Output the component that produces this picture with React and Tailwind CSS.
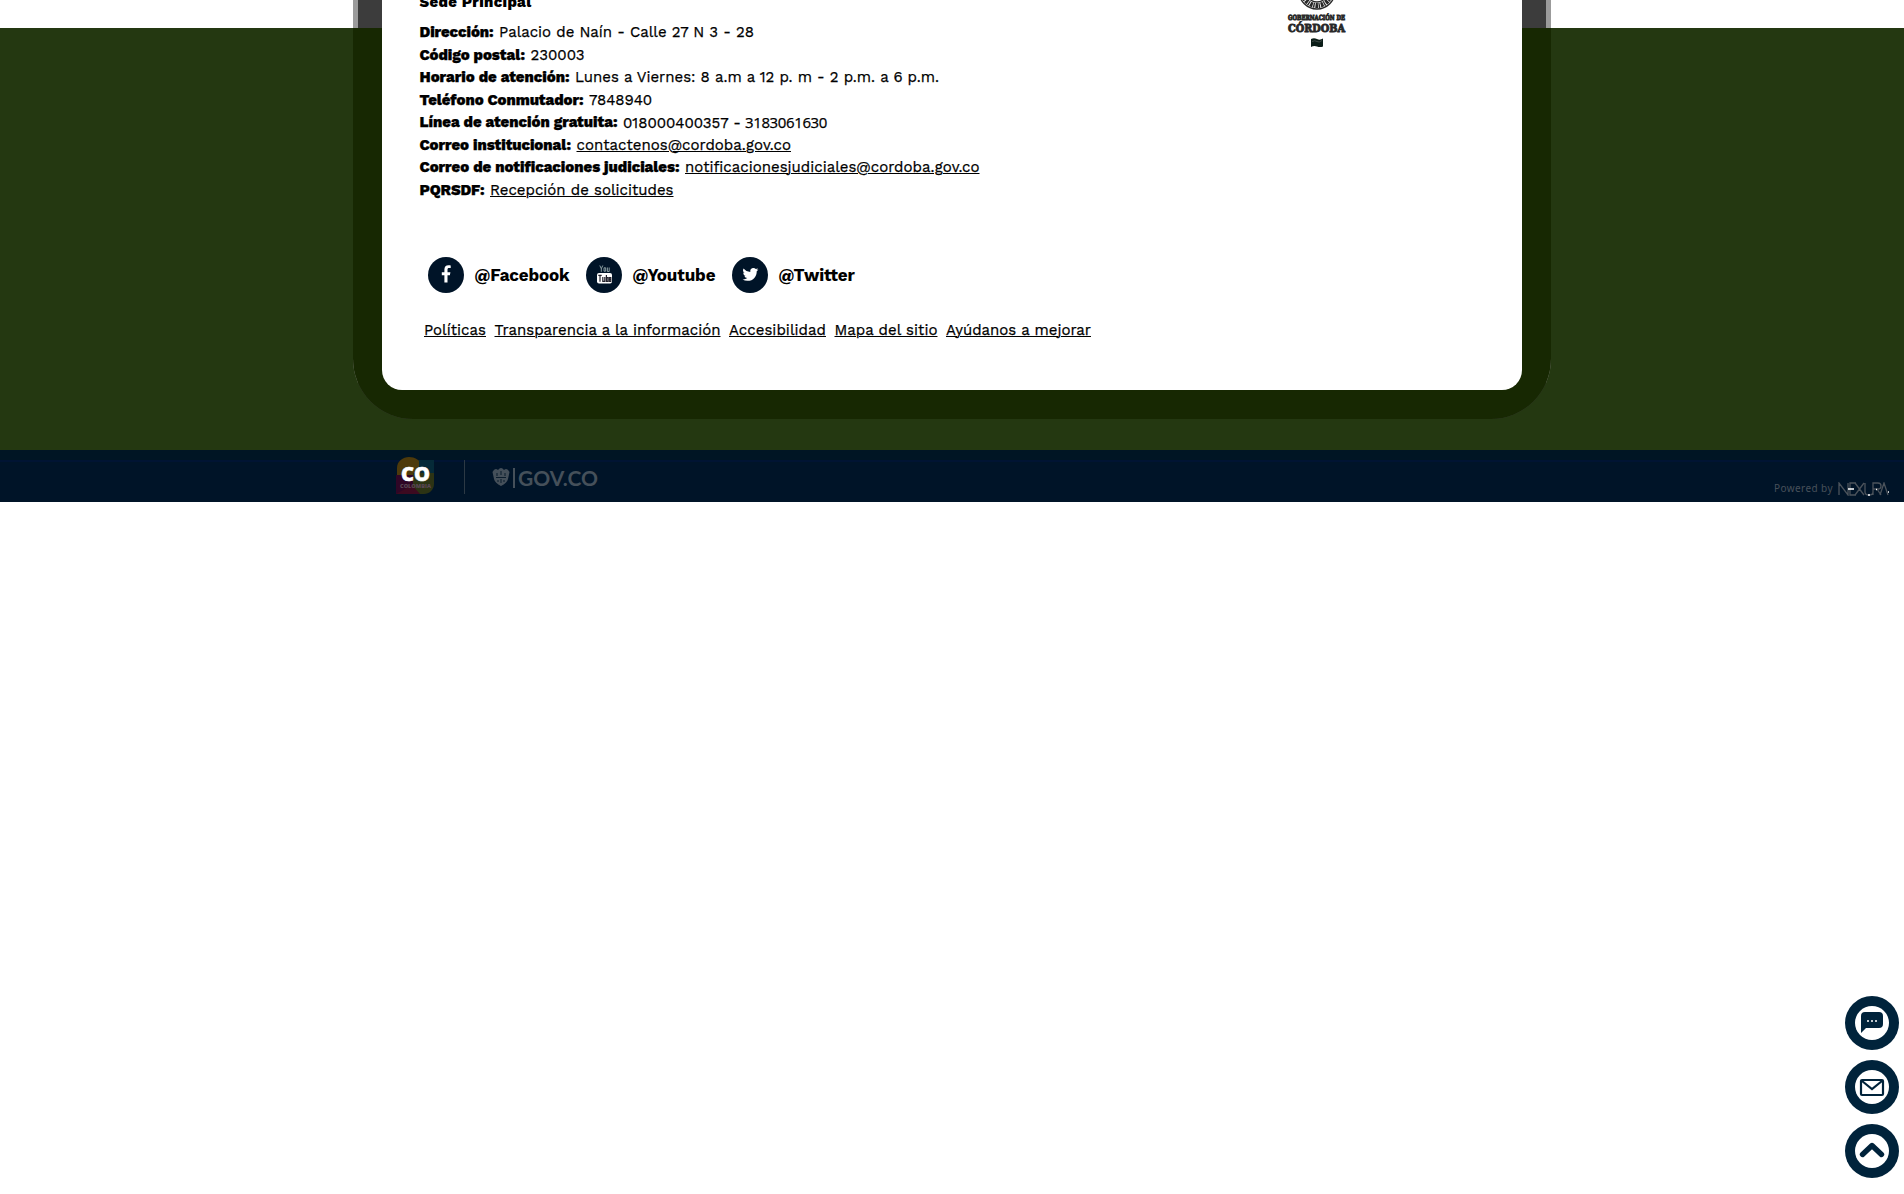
import { useLayoutEffect, useRef } from 'react';

// Text whose tracking is adjusted so that it fills the given width.
function Fit({ w, className = '', children, href }) {
  const ref = useRef(null);
  useLayoutEffect(() => {
    const el = ref.current;
    el.style.letterSpacing = '0px';
    const natural = el.getBoundingClientRect().width;
    el.style.letterSpacing = (w - natural) / children.length + 'px';
  }, [w, children]);
  const Tag = href ? 'a' : 'span';
  return (
    <Tag ref={ref} href={href} className={`inline-block whitespace-pre ${href ? 'underline decoration-1 underline-offset-[1px]' : ''} ${className}`}>
      {children}
    </Tag>
  );
}

const rows = [
  ['Dirección:', 74, 'Palacio de Naín - Calle 27 N 3 - 28', 255],
  ['Código postal:', 105.5, '230003', 54],
  ['Horario de atención:', 150, 'Lunes a Viernes: 8 a.m a 12 p. m - 2 p.m. a 6 p.m.', 364],
  ['Teléfono Conmutador:', 164, '7848940', 63],
  ['Línea de atención gratuita:', 198, '018000400357 -', 118, null, '3183061630'],
  ['Correo institucional:', 151.5, 'contactenos@cordoba.gov.co', 214.5, '#correo'],
  ['Correo de notificaciones judiciales:', 260, 'notificacionesjudiciales@cordoba.gov.co', 294.5, '#notificaciones'],
  ['PQRSDF:', 65, 'Recepción de solicitudes', 183.5, '#pqrsdf'],
];

const links = [
  ['Políticas', 62],
  ['Transparencia a la información', 226],
  ['Accesibilidad', 97],
  ['Mapa del sitio', 103],
  ['Ayúdanos a mejorar', 145],
];

function Facebook() {
  return (
    <svg viewBox="0 0 36 36" className="h-9 w-9">
      <circle cx="18" cy="18" r="18" fill="#001428" />
      <path d="M16.4 25.5v-7.3h-2.6v-3h2.6v-2.600c0-2.800 1.500-4.300 4-4.300 1.200 0 2.300.2 2.300.2v2.600H21c-1.200 0-1.500.7-1.500 1.500v2.600h2.900l-.5 3h-2.400v7.300z" fill="#fff" />
    </svg>
  );
}

function Youtube() {
  return (
    <svg viewBox="0 0 36 36" className="h-9 w-9">
      <circle cx="18" cy="18" r="18" fill="#001428" />
      <path d="M13.8 8.5l1.5 3.2v3.1M16.8 8.5l-1.500 3.200M18 10.800h1.700v3.400H18zM21.400 10.500v4h1.800v-4" fill="none" stroke="#a9bdbd" strokeWidth=".8" />
      <rect x="11" y="16" width="15" height="10.500" rx="2" fill="#fff" />
      <path d="M12.300 18.300h3.400M14 18.300v6.500M16.800 20v4.300h2V20M20.400 18v6.300h1.500v-3.600h-1.500M24.800 22.800v1.500h-1.500v-3.600h1.500v1.600h-1.500" fill="none" stroke="#24232d" strokeWidth="1.2" />
    </svg>
  );
}

function Twitter() {
  return (
    <svg viewBox="0 0 36 36" className="h-9 w-9">
      <circle cx="18" cy="18" r="18" fill="#001428" />
      <path transform="translate(10.5 9.5) scale(.66)" d="M23.95 4.57a10 10 0 0 1-2.82.77 4.96 4.96 0 0 0 2.16-2.72c-.95.55-2 .96-3.13 1.18a4.92 4.92 0 0 0-8.38 4.48C7.69 8.1 4.07 6.13 1.64 3.16a4.92 4.92 0 0 0 1.52 6.57 4.9 4.9 0 0 1-2.23-.61v.06a4.92 4.92 0 0 0 3.95 4.83 5 5 0 0 1-2.21.08 4.94 4.94 0 0 0 4.6 3.42A9.87 9.87 0 0 1 0 19.54a13.99 13.99 0 0 0 7.55 2.21c9.05 0 14-7.5 14-13.98 0-.21 0-.42-.02-.63a9.94 9.94 0 0 0 2.46-2.55z" fill="#fff" />
    </svg>
  );
}

const socials = [
  [Facebook, '@Facebook', 95, 'w-[158px]'],
  [Youtube, '@Youtube', 83, 'w-[146px]'],
  [Twitter, '@Twitter', 76, 'w-[140px]'],
];

function CordobaSeal() {
  return (
    <svg viewBox="0 0 64 50" className="h-[50px] w-16" fontFamily="'DejaVu Serif', serif" fontWeight="700" fill="#282828">
      <circle cx="30" cy="-9" r="18" fill="none" stroke="#282828" strokeWidth="1.4" />
      <circle cx="30" cy="-9" r="14.5" fill="none" stroke="#282828" strokeWidth="5" strokeDasharray="2.6 .8 1.4 .6" />
      <circle cx="30" cy="-9" r="11" fill="none" stroke="#282828" strokeWidth="1.4" />
      <text x="1" y="20" fontSize="7" textLength="57" lengthAdjust="spacingAndGlyphs" stroke="#282828" strokeWidth="1">GOBERNACIÓN DE</text>
      <text x="1" y="31.5" fontSize="11.5" textLength="57" lengthAdjust="spacingAndGlyphs" stroke="#282828" strokeWidth="1">CÓRDOBA</text>
      <path d="M24 39q3-1.500 6 0t6-.5v8q-3 1.200-6 0t-6 .5z" fill="#0b1d18" />
      <path d="M25 41.500q3-1.500 5 0t5-1" fill="none" stroke="#4c5653" strokeWidth=".8" />
    </svg>
  );
}

function ColombiaLogo() {
  return (
    <svg viewBox="0 0 40 38" className="h-[38px] w-10" fontFamily="'Open Sans', sans-serif">
      <path d="M1 11C1 4 7 0 13 0c6 0 11 3 12 8v12H1z" fill="#4d3a0b" />
      <path d="M23 3h15v14H23z" fill="#052a38" />
      <path d="M0 18h20v19H0z" fill="#2f0626" />
      <path d="M17 16h21v11c0 6-5 10-10 10H17z" fill="#2c3314" />
      <path d="M0 37l16-9 8 9z" fill="#3c0a20" />
      <text x="5" y="23.500" fontSize="20" fontWeight="800" fill="#fff" stroke="#fff" strokeWidth=".5" textLength="29" lengthAdjust="spacingAndGlyphs">CO</text>
      <text x="4" y="31" fontSize="5" fontWeight="800" fill="#594653" textLength="31" lengthAdjust="spacingAndGlyphs">COLOMBIA</text>
    </svg>
  );
}

function GovLogo() {
  return (
    <svg viewBox="0 0 106 24" className="h-6 w-[106px]" fontFamily="Lato, sans-serif">
      <path d="M.5 6Q3 1 6 4q3-4 6 0 3-3 5.500 2l-1.500 7q-1 4-7 7-6-3-7-7z" fill="#45505a" />
      <path d="M5 7v3M13 7v3M9 5v4M4 11.500h10M6 14v2M9 13v4M12 14v2" stroke="#0b1d2d" strokeWidth="1" />
      <path d="M22 2v20" stroke="#45505a" strokeWidth="2" />
      <text x="26" y="19.500" fontSize="21.500" fontWeight="700" fill="#45505a" textLength="80" lengthAdjust="spacingAndGlyphs">GOV.CO</text>
    </svg>
  );
}

function NexuraLogo() {
  return (
    <svg viewBox="0 0 52 14" className="h-3.5 w-[52px]" fill="none" stroke="#4b535b" strokeWidth="1.3">
      <path d="M1 13V1l9 12V1M18 1h-6v12h6M17 1l9 12M26 1l-9 12M27 1v9q0 3 4 3t4-3V1M35 13V1h5q3 0 3 3t-3 3h-5M39 7l4 6M42 13l4-12 4 12" />
      <path d="M10 7h6M30 13h2" stroke="#fff" strokeWidth="1.4" />
      <path d="M38 7.500h1M50 10h1" stroke="#fff" />
    </svg>
  );
}

function RoundButton({ label, children }) {
  return (
    <button aria-label={label} className="block h-[54px] w-[54px]">
      <svg viewBox="0 0 54 54" className="h-full w-full">
        <circle cx="27" cy="27" r="27" fill="#00233b" />
        <circle cx="27" cy="27" r="17" fill="#fff" />
        {children}
      </svg>
    </button>
  );
}

export default function App() {
  return (
    <div className="relative h-[1194px] w-[1904px] overflow-hidden bg-white font-['Work_Sans',Inter,sans-serif] text-black">
      <div className="flex h-[450px] justify-center bg-[linear-gradient(#fff_28px,#243811_28px)]">
        <div className="h-[419px] w-[1198px] overflow-hidden rounded-b-[60px] bg-[linear-gradient(90deg,#9b9b9b_5px,#3c3c3c_5px,#3c3c3c_1193px,#9b9b9b_1193px)]">
          <div className="h-full bg-[linear-gradient(transparent_28px,#172802_28px)] px-[29px]">
            <main className="flex h-[390px] justify-between rounded-b-[20px] bg-white pl-[37.5px]">
              <div>
                <h2 className="flex h-[21px] items-end pb-[8px] text-[15px] leading-[22px] font-extrabold">
                  <Fit w={112}>Sede Principal</Fit>
                </h2>
                <div className="text-[15px] leading-[22.5px] [-webkit-text-stroke:0.25px_black]">
                  {rows.map(([label, lw, value, vw, href, extra]) => (
                    <p key={label} className="flex h-[22.5px] gap-[5.5px]">
                      <Fit w={lw} className="font-extrabold">{label}</Fit>
                      <span>
                        <Fit w={vw} href={href}>{value}</Fit>
                        {extra && <Fit w={82} className="ml-1 font-['Open_Sans',sans-serif]">{extra}</Fit>}
                      </span>
                    </p>
                  ))}
                </div>
                <div className="mt-[56px] ml-[8px] flex h-9">
                  {socials.map(([Icon, name, w, box]) => (
                    <a key={name} href="#social" className={`flex items-center gap-[11px] ${box}`}>
                      <Icon />
                      <Fit w={w} className="pt-px text-[17px] font-bold">{name}</Fit>
                    </a>
                  ))}
                </div>
                <nav className="mt-[26px] ml-[4.5px] flex gap-[8.5px] text-[15px] leading-[22px] [-webkit-text-stroke:0.25px_black]">
                  {links.map(([name, w]) => <Fit key={name} w={w} href="#enlace">{name}</Fit>)}
                </nav>
              </div>
              <div className="mr-[171px]"><CordobaSeal /></div>
            </main>
          </div>
        </div>
      </div>
      <footer className="flex h-[52px] items-start justify-between bg-[linear-gradient(#001524_10px,#001433_10px,#001433_12px,#001428_12px)]">
        <div className="flex pl-[396px]">
          <div className="pt-[7px]"><ColombiaLogo /></div>
          <div className="mt-2.5 ml-[28px] h-[34px] w-px bg-[#2c3944]" />
          <div className="mt-4 ml-[27px]"><GovLogo /></div>
        </div>
        <div className="flex items-center gap-[5px] pt-[31px] pr-[14px] font-['Noto_Sans',sans-serif] text-[10px] leading-[15px] text-[#47505a]">
          <Fit w={59}>Powered by</Fit>
          <NexuraLogo />
        </div>
      </footer>
      <aside className="absolute top-[996px] left-[1845px] flex flex-col gap-2.5">
        <RoundButton label="Chat">
          <path d="M20 16h14q4 0 4 4v8q0 4-4 4H21l-5 5V20q0-4 4-4z" fill="#00233b" />
          <path d="M22 25h2M26 25h2M30 25h2" stroke="#fff" strokeWidth="1.5" />
        </RoundButton>
        <RoundButton label="Correo">
          <rect x="16" y="20" width="22" height="15" rx="1" fill="none" stroke="#00233b" strokeWidth="2.2" />
          <path d="M17 21l10 8 10-8" fill="none" stroke="#00233b" strokeWidth="2.2" />
        </RoundButton>
        <RoundButton label="Subir">
          <path d="M17.500 30.500l9.500-9 9.500 9" fill="none" stroke="#00233b" strokeWidth="5.4" strokeLinecap="round" strokeLinejoin="round" />
        </RoundButton>
      </aside>
    </div>
  );
}
